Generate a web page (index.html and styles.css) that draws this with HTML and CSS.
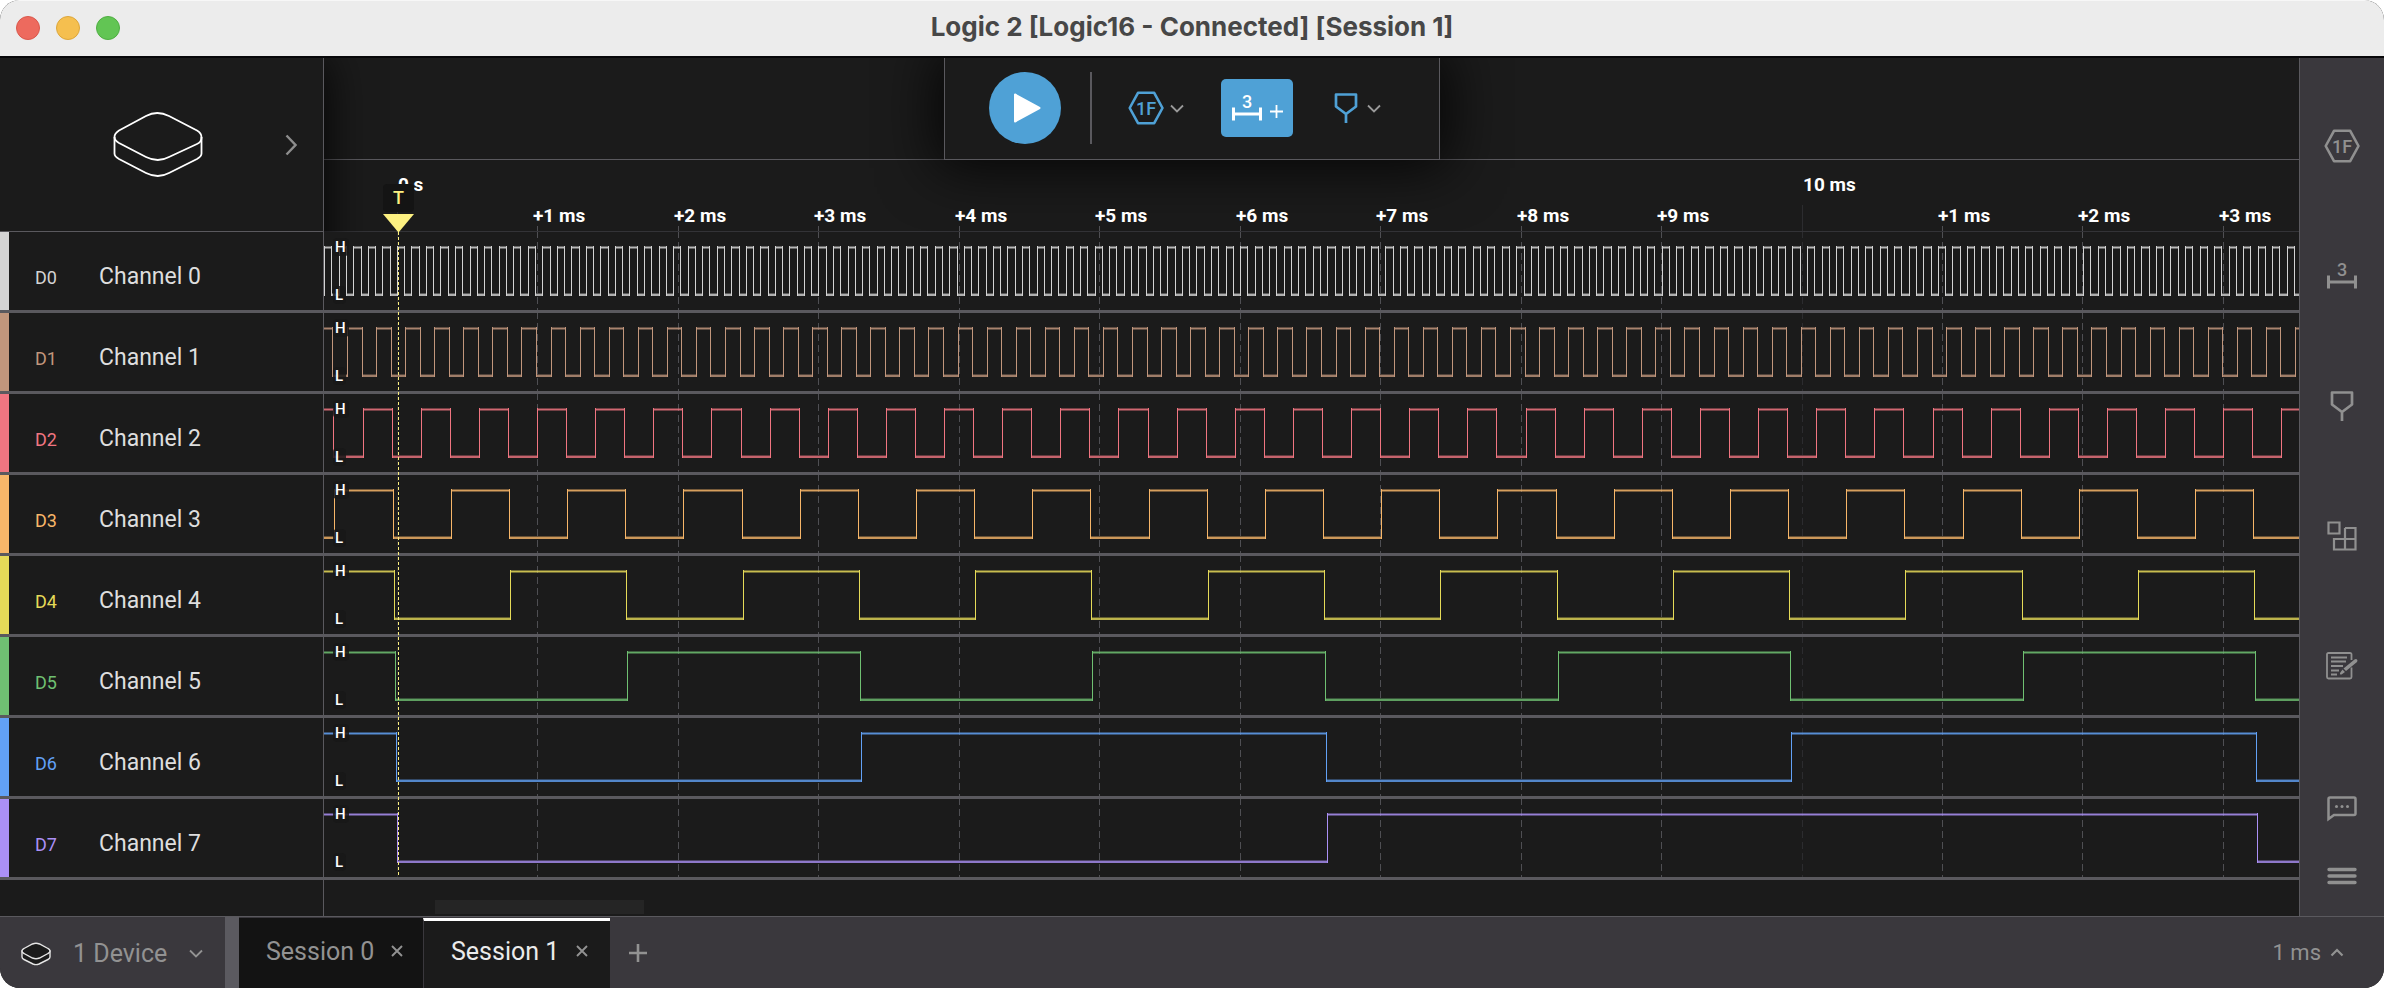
FILE: index.html
```html
<!DOCTYPE html>
<html lang="en">
<head>
<meta charset="utf-8">
<title>Logic 2 [Logic16 - Connected] [Session 1]</title>
<link rel="stylesheet" href="styles.css">
</head>
<body>
<svg class="sprite" aria-hidden="true">
  <symbol id="hex" viewBox="0 0 36 34">
    <path d="M10 1.800h16.200L34.500 17l-8.300 15.200H10L1.700 17z" fill="none" stroke="currentColor" stroke-width="2.600" stroke-linejoin="round"/>
    <text x="18" y="24" text-anchor="middle" class="icon-text">1F</text>
  </symbol>
  <symbol id="measure" viewBox="0 0 30 28">
    <text x="15" y="14" text-anchor="middle" class="icon-text">3</text>
    <path d="M1.500 13.500v13M28.500 13.500v13M1.500 20h27" fill="none" stroke="currentColor" stroke-width="3"/>
  </symbol>
  <symbol id="marker" viewBox="0 0 24 32">
    <path d="M2 2.500h20v12l-10 7.500-10-7.500zM12 22v9" fill="none" stroke="currentColor" stroke-width="2.700" stroke-linejoin="round"/>
  </symbol>
  <symbol id="down" viewBox="0 0 14 9">
    <path d="M1 1.500l6 6 6-6" fill="none" stroke="currentColor" stroke-width="1.800"/>
  </symbol>
  <symbol id="cross" viewBox="0 0 12 12">
    <path d="M1 1l10 10M11 1L1 11" fill="none" stroke="currentColor" stroke-width="1.900"/>
  </symbol>
</svg>
<div class="window">
  <header class="titlebar">
    <div class="lights"><span class="light red"></span><span class="light amber"></span><span class="light green"></span></div>
    <h1 class="title">Logic 2 [Logic16 - Connected] [Session 1]</h1>
  </header>

  <div class="toolbar">
    <button class="play" aria-label="Start capture"><svg width="28" height="32" viewBox="0 0 28 32"><path d="M2 2.500v27L26.500 16z" fill="#fff" stroke="#fff" stroke-width="2" stroke-linejoin="round"/></svg></button>
    <span class="divider"></span>
    <button class="tool analyzers" aria-label="Analyzers"><svg width="36" height="34"><use href="#hex"/></svg><svg class="caret" width="14" height="9"><use href="#down"/></svg></button>
    <button class="tool active" aria-label="Add measurement"><svg width="30" height="28"><use href="#measure"/></svg><svg width="13" height="13" viewBox="0 0 13 13"><path d="M6.500 0v13M0 6.500h13" stroke="#fff" stroke-width="1.800"/></svg></button>
    <button class="tool" aria-label="Add marker"><svg width="24" height="32"><use href="#marker"/></svg><svg class="caret" width="14" height="9"><use href="#down"/></svg></button>
  </div>

  <main class="main">
    <aside class="channels">
      <div class="device-head">
        <svg class="device-logo" width="90" height="68" viewBox="0 0 90 68"><g fill="none" stroke="#fff" stroke-width="1.800"><path d="M6 19.500L33 5q11-6 23 0l28 14.500q4.500 2.500 4.500 7t-4.500 6.500L56 46q-11 6-23 0L6 32q-4.500-2.500-4.500-6t4.500-6.500z"/><path d="M1.500 26v16.500q0 3 4.500 5.500l27 14q12 6 23 0l28-14q4.500-2.500 4.500-5.500V26"/></g></svg>
        <button class="expand" aria-label="Device settings"><svg width="12" height="22" viewBox="0 0 12 22"><path d="M1.500 1.500L10.500 11l-9 9.500" fill="none" stroke="#8d8d8d" stroke-width="2.400"/></svg></button>
      </div>
      <div class="channel d0"><span class="pin">D0</span><span class="name">Channel 0</span></div>
      <div class="channel d1"><span class="pin">D1</span><span class="name">Channel 1</span></div>
      <div class="channel d2"><span class="pin">D2</span><span class="name">Channel 2</span></div>
      <div class="channel d3"><span class="pin">D3</span><span class="name">Channel 3</span></div>
      <div class="channel d4"><span class="pin">D4</span><span class="name">Channel 4</span></div>
      <div class="channel d5"><span class="pin">D5</span><span class="name">Channel 5</span></div>
      <div class="channel d6"><span class="pin">D6</span><span class="name">Channel 6</span></div>
      <div class="channel d7"><span class="pin">D7</span><span class="name">Channel 7</span></div>
    </aside>

    <section class="plot">
      <div class="plot-head"></div>
      <div class="ruler"><svg class="ruler-svg" id="ruler"></svg></div>
      <div class="waves">
        <div class="wave d0"><svg class="wave-svg"></svg><span class="level high">H</span><span class="level low">L</span></div>
        <div class="wave d1"><svg class="wave-svg"></svg><span class="level high">H</span><span class="level low">L</span></div>
        <div class="wave d2"><svg class="wave-svg"></svg><span class="level high">H</span><span class="level low">L</span></div>
        <div class="wave d3"><svg class="wave-svg"></svg><span class="level high">H</span><span class="level low">L</span></div>
        <div class="wave d4"><svg class="wave-svg"></svg><span class="level high">H</span><span class="level low">L</span></div>
        <div class="wave d5"><svg class="wave-svg"></svg><span class="level high">H</span><span class="level low">L</span></div>
        <div class="wave d6"><svg class="wave-svg"></svg><span class="level high">H</span><span class="level low">L</span></div>
        <div class="wave d7"><svg class="wave-svg"></svg><span class="level high">H</span><span class="level low">L</span></div>
        <span class="trigger-line"></span>
      </div>
      <div class="trigger"><span class="trigger-tag">T</span><svg width="31" height="19" viewBox="0 0 31 19"><path d="M0 0h31L15.500 18.500z" fill="#fdf181"/></svg></div>
      <div class="scroll"><span class="thumb"></span></div>
    </section>

    <nav class="rail">
      <button class="rail-btn" aria-label="Analyzers"><svg width="36" height="34"><use href="#hex"/></svg></button>
      <button class="rail-btn" aria-label="Measurements"><svg width="30" height="28"><use href="#measure"/></svg></button>
      <button class="rail-btn" aria-label="Markers"><svg width="24" height="32"><use href="#marker"/></svg></button>
      <button class="rail-btn" aria-label="Extensions"><svg width="30" height="30" viewBox="0 0 30 30"><path d="M1.500 1.500h11v11h-11zM18 7h10.500v21.500H7V18h21.500M18 7v21.500" fill="none" stroke="currentColor" stroke-width="2.200"/></svg></button>
      <button class="rail-btn" aria-label="Notes"><svg width="32" height="28" viewBox="0 0 32 28"><path d="M25.500 8V2.500q0-1.500-1.500-1.500H2.500Q1 1 1 2.500v22.500q0 1.500 1.500 1.500H24q1.500 0 1.500-1.500v-9.500" fill="none" stroke="currentColor" stroke-width="1.800"/><path d="M5 5.500h16M5 9.500h15M5 14h12M5 18.500h8M5 22.500h6" fill="none" stroke="currentColor" stroke-width="1.800"/><path d="M28.500 7.500q1.500-1 2.500 0t0 2.500L20 19l-2.500-2.500zM16.500 17.500l2.500 2.500-3.500 2.500q-2 .5-1.500-1.500z" fill="currentColor"/></svg></button>
      <span class="grow"></span>
      <button class="rail-btn short" aria-label="Feedback"><svg width="30" height="26" viewBox="0 0 30 26"><path d="M1.500 23V3q0-1.500 1.500-1.500h24q1.500 0 1.500 1.500v14.500q0 1.500-1.500 1.500H7z" fill="none" stroke="currentColor" stroke-width="2.500"/><circle cx="9.500" cy="10.500" r="1.500" fill="currentColor"/><circle cx="15" cy="10.500" r="1.500" fill="currentColor"/><circle cx="20.500" cy="10.500" r="1.500" fill="currentColor"/></svg></button>
      <button class="rail-btn short" aria-label="Menu"><svg width="30" height="18" viewBox="0 0 30 18"><path d="M2 2.500h26M2 9h26M2 15.500h26" stroke="currentColor" stroke-width="3.400" stroke-linecap="round"/></svg></button>
    </nav>
  </main>

  <footer class="footer">
    <button class="devices"><svg width="30" height="24" viewBox="0 0 30 24"><g fill="#1b1b1b" stroke="#e4e4e4" stroke-width="1.400"><path d="M1 9v6q0 1.500 2 2.500l9 4.500q3 1.200 6 0l9-4.500q2-1 2-2.500V9z"/><path d="M3 6.500l8.500-4.500q3.500-1.500 7 0L27 6.500q2 1 2 2.500t-2 2.500L18.500 16q-3.500 1.500-7 0L3 11.500Q1 10.500 1 9t2-2.500z"/></g></svg><span class="devices-text">1 Device</span><svg width="14" height="9"><use href="#down"/></svg></button>
    <span class="splitter"></span>
    <div class="tab"><a class="tab-link" href="#session-0">Session 0</a><button class="close" aria-label="Close Session 0"><svg width="12" height="12"><use href="#cross"/></svg></button></div>
    <div class="tab current"><a class="tab-link" href="#session-1">Session 1</a><button class="close" aria-label="Close Session 1"><svg width="12" height="12"><use href="#cross"/></svg></button></div>
    <button class="add" aria-label="New session"><svg width="18" height="18" viewBox="0 0 18 18"><path d="M9 0v18M0 9h18" stroke="currentColor" stroke-width="2.600"/></svg></button>
    <span class="grow"></span>
    <button class="scale">1 ms<svg width="14" height="9" viewBox="0 0 14 9"><path d="M1.500 7.500L7 2l5.500 5.500" fill="none" stroke="currentColor" stroke-width="2.200"/></svg></button>
  </footer>
</div>
<script src="app.js"></script>
</body>
</html>
```

FILE: styles.css
```css
* { box-sizing: border-box; }
body { margin: 0; background: #fff; font-family: Roboto, "Liberation Sans", sans-serif; }
button { margin: 0; padding: 0; border: 0; background: none; color: inherit; font: inherit; cursor: pointer; }
svg { display: block; flex: none; }
.sprite { display: none; }
.grow { flex: 1; }

.window { position: relative; display: flex; flex-direction: column; min-height: 100vh; overflow: hidden; border-radius: 20px; background: #1b1b1b; }

.titlebar { position: relative; z-index: 4; display: flex; align-items: center; justify-content: center; height: 58px; border-top: 1px solid #f7f7f7; border-bottom: 2px solid #08080a; background: #ececec; }
.lights { position: absolute; left: 16px; top: 15px; display: flex; gap: 16px; }
.light { width: 24px; height: 24px; border-radius: 50%; border: 1px solid; }
.red { background: #ed6a5e; border-color: #d9584c; }
.amber { background: #f5bf4f; border-color: #dca63b; }
.green { background: #62c554; border-color: #4fae42; }
.title { margin: 0; padding-bottom: 3px; font: 700 26px/32px Inter, "Liberation Sans", sans-serif; color: #474747; }

.toolbar { position: absolute; z-index: 1; top: 58px; left: 50%; transform: translateX(-50%); display: flex; align-items: center; width: 496px; height: 102px; padding: 0 0 1px 44px; border: 1px solid #5a595e; border-top: 0; background: #1b1b1b; box-shadow: 0 0 56px 8px rgba(0, 0, 0, 0.8); color: #4fa1d6; }
.play { display: flex; align-items: center; justify-content: center; width: 72px; height: 72px; border-radius: 50%; background: #4fa1d6; padding-left: 4px; }
.divider { width: 2px; height: 72px; margin: 0 36px 0 29px; background: #5a595e; }
.tool { display: flex; align-items: center; gap: 6px; }
.tool.active { width: 72px; height: 58px; margin: 0 41px 0 37px; justify-content: center; gap: 8px; border-radius: 5px; background: #4fa1d6; color: #fff; }
.tool.active svg + svg { margin-top: 6px; }
.tool .caret { color: #9a9a9a; }
.tool:last-child { gap: 9px; }
.icon-text { font: 500 18px Roboto, sans-serif; fill: currentColor; }

.main { flex: 1; display: flex; }
.channels { position: relative; z-index: 1; flex: none; width: 324px; border-right: 1px solid #5a595e; background: #1b1b1b; box-shadow: 0 0 44px rgba(0, 0, 0, 0.9); }
.device-head { display: flex; align-items: center; justify-content: space-between; height: 174px; padding: 0 26px 0 113px; border-bottom: 1px solid #5a595e; }
.channel { display: flex; align-items: baseline; height: 81px; border-bottom: 3px solid #5a595e; padding: 29px 0 0 35px; line-height: 32px; background: linear-gradient(var(--c), var(--c)) 0 0 / 9px 100% no-repeat; }
.pin { width: 64px; font-size: 18px; color: var(--c); }
.name { font-size: 23px; color: #dedede; }
.d0 { --c: #d4d4d4; }
.d1 { --c: #c1967c; }
.d2 { --c: #f07581; }
.d3 { --c: #f7b669; }
.d4 { --c: #e5da58; }
.d5 { --c: #6fc072; }
.d6 { --c: #62a1f6; }
.d7 { --c: #ab90f6; }

.plot { position: relative; flex: 1; min-width: 0; display: flex; flex-direction: column; }
.plot-head { height: 102px; border-bottom: 1px solid #5a595e; }
.ruler { height: 72px; border-bottom: 1px solid #333337; }
.ruler-svg { position: relative; z-index: 2; width: 100%; height: 71px; }
.ruler-text { font: 700 19px Roboto, sans-serif; fill: #fff; }
.tick, .grid { stroke: #4f4f53; stroke-width: 1; }
.grid { stroke-dasharray: 7 4; }
.tick.major, .grid.major { stroke: #2c2c2f; }
.waves { position: relative; z-index: 3; background: #1b1b1b; }
.wave { position: relative; height: 81px; border-bottom: 3px solid #5a595e; }
.wave-svg { width: 100%; height: 78px; overflow: hidden; }
.edge { stroke: var(--c); stroke-width: 1; fill: none; }
.soft { stroke: var(--c); stroke-width: 3; fill: none; opacity: 0.42; }
.core { stroke: var(--c); stroke-width: 1; fill: none; opacity: 0.75; }
.base { stroke: var(--c); stroke-width: 2; fill: none; opacity: 0.8; }
.shade { stroke: var(--c); stroke-width: 1; fill: none; opacity: 0.35; }
.level { position: absolute; left: 9px; padding: 0 3px 0 2px; border-radius: 4px; background: rgba(24, 24, 24, 0.85); color: #fff; font-size: 15px; font-weight: 500; line-height: 18px; }
.high { top: 6px; }
.low { top: 54px; }
.trigger-line { position: absolute; top: 0; bottom: 3px; left: 74px; width: 1px; background: repeating-linear-gradient(#fdf181 0 3px, transparent 3px 5px); }
.trigger { position: absolute; z-index: 4; left: 59px; top: 126px; display: flex; flex-direction: column; gap: 2px; }
.trigger-tag { width: 31px; height: 28px; border-radius: 4px; background: #141414; color: #fdf181; font-size: 18px; font-weight: 500; line-height: 28px; text-align: center; }
.scroll { position: relative; z-index: 3; flex: 1; display: flex; align-items: flex-end; padding: 0 0 2px 111px; min-height: 36px; background: #1b1b1b; }
.thumb { width: 209px; height: 14px; background: #252525; }

.rail { flex: none; display: flex; flex-direction: column; width: 85px; padding: 23px 0 7px; border-left: 1px solid #5a595e; background: #3a383d; color: #909090; }
.rail-btn { display: flex; align-items: center; justify-content: center; height: 130px; }
.rail-btn.short { height: 67px; }

.footer { position: relative; z-index: 4; display: flex; align-items: stretch; height: 72px; border-top: 1px solid #5a595e; background: #3a383d; color: #929292; font-size: 25px; }
.devices { display: flex; align-items: center; width: 225px; padding: 2px 0 0 21px; gap: 22px; }
.splitter { width: 14px; background: #5b5a60; }
.tab { display: flex; align-items: center; gap: 17px; width: 184px; margin-top: 1px; padding: 0 0 4px 27px; background: #131313; }
.tab-link { color: inherit; text-decoration: none; }
.tab.current { width: 187px; border-top: 3px solid #fff; border-left: 1px solid #3a383d; padding-bottom: 7px; background: #1b1b1b; }
.current .tab-link { color: #ebebeb; }
.add { display: flex; align-items: center; padding: 0 19px; }
.scale { display: flex; align-items: center; gap: 9px; padding-right: 40px; font-size: 22px; }
```

FILE: app.js
```js
const NS = 'http://www.w3.org/2000/svg';
const ORIGIN = 73.5;
const MS = 140.45;

const ruler = document.getElementById('ruler');
const extent = ruler.getBoundingClientRect().width;

function add(parent, name, attrs, text) {
  const el = document.createElementNS(NS, name);
  for (const key in attrs) el.setAttribute(key, attrs[key]);
  if (text) el.textContent = text;
  parent.appendChild(el);
}

const msX = n => Math.floor(ORIGIN + n * MS) + 0.5;

for (let n = 0; msX(n) < extent; n++) {
  const x = msX(n);
  if (n % 10 === 0) {
    add(ruler, 'text', { x: Math.round(x), y: 31, class: 'ruler-text' }, n === 0 ? '0 s' : n + ' ms');
    add(ruler, 'path', { d: `M${x} 45V71`, class: 'tick major' });
  } else {
    add(ruler, 'text', { x: Math.round(x) - 5, y: 62, class: 'ruler-text' }, `+${n % 10} ms`);
    add(ruler, 'path', { d: `M${x} 66V71`, class: 'tick' });
  }
}

// Binary counter: channel k halves the rate of channel k - 1.
document.querySelectorAll('.wave-svg').forEach((svg, k) => {
  for (let n = 0; msX(n) < extent; n++) {
    add(svg, 'path', { d: `M${msX(n)} -1V78`, class: n % 10 ? 'grid' : 'grid major' });
  }
  const half = 930.4 / 2 ** (7 - k);
  const fall = 66.1 + k;
  let i = -Math.ceil(fall / half) - 1;
  let edges = '', highs = '', lows = '';
  for (; fall + i * half < extent; i++) {
    const x = Math.floor(fall + i * half);
    const next = Math.floor(fall + (i + 1) * half);
    edges += `M${x + 0.5} 14V64`;
    if (i % 2 === 0) lows += `M${x} YH${next + 1}`;
    else highs += `M${x} YH${next + 1}`;
  }
  const at = (path, y) => path.replaceAll('Y', y);
  add(svg, 'path', { d: at(highs, 15.5), class: 'soft' });
  add(svg, 'path', { d: at(highs, 15.5), class: 'core' });
  add(svg, 'path', { d: at(lows, 63), class: 'base' });
  add(svg, 'path', { d: at(lows, 61.5), class: 'shade' });
  add(svg, 'path', { d: edges, class: 'edge' });
});
```
